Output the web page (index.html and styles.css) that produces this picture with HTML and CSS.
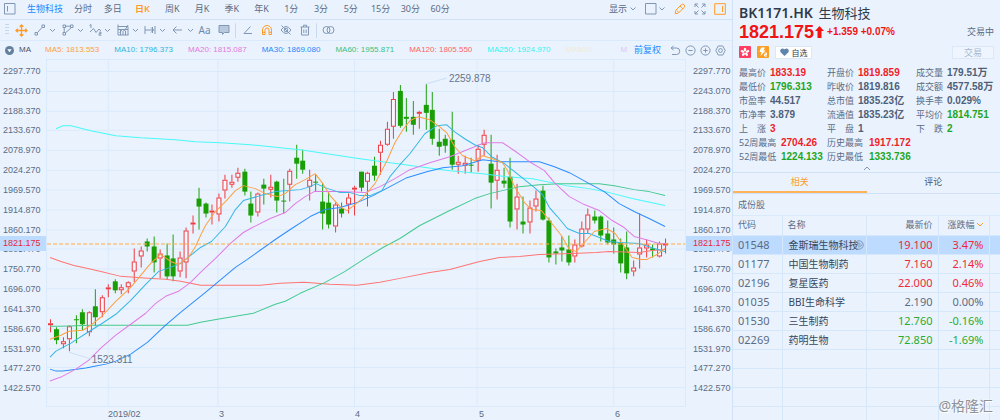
FILE: index.html
```html
<!DOCTYPE html>
<html lang="zh-CN">
<head>
<meta charset="utf-8">
<title>BK1171.HK 生物科技</title>
<link rel="stylesheet" href="styles.css">
</head>
<body>
<div class="app">
  <main class="main">
    <nav class="periods">
      <button class="icon-btn layout-btn" aria-label="布局"><svg class="ico" width="12" height="12" viewBox="0 0 12 12"><path d="M.5.5h10.500v10.500H.5zM3.500 3v5.500"/></svg></button>
      <a class="sector" href="#">生物科技</a>
      <div class="tabs">
        <button>分时</button><button>多日</button><button class="active">日K</button><button>周K</button><button>月K</button><button>季K</button><button>年K</button><button>1分</button><button>3分</button><button>5分</button><button>15分</button><button>30分</button><button>60分</button>
      </div>
      <div class="view">
        <button class="icon-btn">显示<svg class="ico" width="8" height="12" viewBox="0 0 8 12"><path d="M1.500 4.500l2.500 2.500 2.500-2.500"/></svg></button>
        <button class="icon-btn" aria-label="窗口布局"><svg class="ico" width="21" height="12" viewBox="0 0 21 12"><path d="M.5.5h10.500v10.500H.5zM14.500 4.500l2.500 2.500 2.500-2.500"/></svg></button>
        <button class="icon-btn hot" aria-label="画线"><svg class="ico" width="12" height="12" viewBox="0 0 12 12"><path d="M1.200 10.800l.6-3.600 5.600-5.600q1.400-1.100 2.600.1t.1 2.700l-5.600 5.600zM6 3l3 3M3 7.500l1.500 1.500"/></svg></button>
        <button class="icon-btn" aria-label="全屏"><svg class="ico" width="12" height="12" viewBox="0 0 12 12"><path d="M1 4V1h3M1 1l3.500 3.500M8 1h3v3M11 1L7.500 4.500M1 8v3h3M1 11l3.500-3.500M8 11h3V8M11 11L7.500 7.500"/></svg></button>
        <button class="icon-btn hot" aria-label="侧栏"><svg class="ico" width="12" height="12" viewBox="0 0 12 12"><path d="M.7.7h10.600v10.600H.7zM8.500 3v6"/></svg></button>
      </div>
    </nav>

    <div class="tools">
      <span class="grip"></span>
      <button class="icon-btn hot move" aria-label="移动"><svg class="ico" width="13" height="13" viewBox="0 0 13 13"><path stroke-width="1.300" d="M6.500 1v11M1 6.500h11M4.700 2.800l1.800-1.800 1.800 1.800M4.700 10.200l1.800 1.800 1.800-1.800M2.800 4.700L1 6.500l1.800 1.800M10.200 4.700L12 6.500l-1.800 1.800"/></svg></button>
      <div class="draw">
        <button class="icon-btn" aria-label="线段"><svg class="ico" width="22" height="12" viewBox="0 0 22 12"><path d="M1 8.500h2.500V11H1zM8 1h2.500v2.500H8zM3.500 8.500L8 3.500M16 5l2.500 2.500L21 5"/></svg></button>
        <button class="icon-btn" aria-label="形状"><svg class="ico" width="22" height="12" viewBox="0 0 22 12"><path d="M1 1h2.500v2.500H1zM8.500 1H11v2.500H8.500zM1 8.500h2.500V11H1zM3.500 2.200h5M2.200 3.500v5M3.500 8.800l6-5.300M16 5l2.500 2.500L21 5"/></svg></button>
        <button class="icon-btn" aria-label="波浪"><svg class="ico" width="22" height="12" viewBox="0 0 22 12"><path d="M.5 1.500L2 .5V4M1 8l3.500-3.500 2.500 4L10 5l2 2M10 8.200h2v1.500h-2v1.500h2.500M16 5l2.500 2.500L21 5"/></svg></button>
        <button class="icon-btn" aria-label="指标"><svg class="ico" width="22" height="12" viewBox="0 0 22 12"><path d="M1 .5V11h10.500M1 2.500h10V11M2.500 9l3-4 2 2 3.500-6M3.500 5v6M6 7v4M8.500 7v4M1 5.500h10M16 5l2.500 2.500L21 5"/></svg></button>
        <button class="icon-btn" aria-label="测量"><svg class="ico" width="22" height="12" viewBox="0 0 22 12"><path d="M1 2v8M11 2v8M1 6h9M7 3.500L9.500 6 7 8.500M8.500 3v6M16 5l2.500 2.500L21 5"/></svg></button>
        <button class="icon-btn" aria-label="箭头"><svg class="ico" width="22" height="12" viewBox="0 0 22 12"><path d="M1 6h9M4.500 2.500L1 6l3.500 3.500M16 5l2.500 2.500L21 5"/></svg></button>
      </div>
      <button class="icon-btn tool aa">Aa</button>
      <button class="icon-btn tool" aria-label="批注"><svg class="ico" width="12" height="12" viewBox="0 0 12 12"><path fill="#b9c9dd" d="M1 1.500h10v7H6.500L4.500 10.500v-2H1z"/></svg></button>
      <span class="sep"></span>
      <button class="icon-btn tool" aria-label="角度"><svg class="ico" width="12" height="12" viewBox="0 0 12 12"><path d="M8.500 2.500L2 9.500h8"/></svg></button>
      <button class="icon-btn hot tool" aria-label="磁铁"><svg class="ico" width="12" height="12" viewBox="0 0 12 12"><path d="M1.500 10.500V6a4.500 4.500 0 0 1 9 0v4.500H8V6a2 2 0 0 0-4 0v4.500zM1.500 8.300H4M8 8.300h2.500"/></svg></button>
      <button class="icon-btn tool" aria-label="隐藏"><svg class="ico" width="12" height="12" viewBox="0 0 12 12"><path d="M1 6q5-7 10 0-5 7-10 0zM1.500 1.500l9 9"/><circle cx="6" cy="6" r="1.800"/></svg></button>
      <button class="icon-btn tool" aria-label="删除"><svg class="ico" width="12" height="12" viewBox="0 0 12 12"><path d="M1.500 3h9M4.500 3V1.200h3V3M2.500 3v8h7V3M4.800 5.500v3.500M7.200 5.500v3.500"/></svg></button>
      <span class="sep"></span>
      <button class="icon-btn tool" aria-label="叠加"><svg class="ico" width="13" height="12" viewBox="0 0 13 12"><circle cx="4.500" cy="6" r="3.500"/><circle cx="8.500" cy="6" r="3.500"/></svg></button>
    </div>

    <div class="legend">
      <button class="icon-btn" aria-label="指标设置"><svg width="9" height="9" viewBox="0 0 9 9"><circle cx="4.500" cy="4.500" r="4.500" fill="#64809f"/><path fill="#fff" d="M2.300 3.200h4.400L4.500 6.300z"/></svg></button>
      <span class="ma-name">MA</span>
      <div class="mas">
        <span class="c5">MA5: 1813.553</span><span class="c10">MA10: 1796.373</span><span class="c20">MA20: 1815.087</span><span class="c30">MA30: 1869.080</span><span class="c60">MA60: 1955.871</span><span class="c120">MA120: 1805.550</span><span class="c250">MA250: 1924.970</span><span class="c500">MA500:</span><span class="c1000">M</span>
      </div>
      <a class="adjust" href="#">前复权</a>
      <div class="zooms">
        <button class="icon-btn" aria-label="撤销"><svg class="ico" width="11" height="11" viewBox="0 0 11 11"><path d="M3.500 1L1 3l2.500 2M1 3h5.500a3.200 3.200 0 0 1 0 6.500H2"/></svg></button>
        <button class="icon-btn" aria-label="缩小"><svg class="ico" width="11" height="11" viewBox="0 0 11 11"><circle cx="5.500" cy="5.500" r="4.600"/><path d="M3.300 5.500h4.400"/></svg></button>
        <button class="icon-btn" aria-label="放大"><svg class="ico" width="11" height="11" viewBox="0 0 11 11"><circle cx="5.500" cy="5.500" r="4.600"/><path d="M3.300 5.500h4.400M5.500 3.300v4.400"/></svg></button>
        <button class="icon-btn" aria-label="设置"><svg class="ico" width="11" height="11" viewBox="0 0 11 11"><path d="M3.200 1h4.600l2.400 4.500L7.800 10H3.200L.8 5.500z"/><circle cx="5.500" cy="5.500" r="1.900"/></svg></button>
      </div>
    </div>

    <div class="chart">
      <div class="axis left"><div class="ticks"></div><span class="now">1821.175</span></div>
      <div class="plot">
        <svg id="plot" viewBox="46 59 640 348" preserveAspectRatio="none" role="img" aria-label="日K线图"></svg>
        <span class="note high">2259.878</span>
        <span class="note low">1523.311</span>
      </div>
      <div class="axis right"><div class="ticks"></div><span class="now">1821.175</span></div>
      <div class="months"><span></span><span>2019/02</span><span>3</span><span>4</span><span>5</span><span>6</span></div>
    </div>
  </main>

  <aside class="side">
    <header class="quote">
      <h1>BK1171.HK <span>生物科技</span></h1>
      <div class="price">
        <strong>1821.175</strong><svg width="9" height="12" viewBox="0 0 9 12"><path fill="#f01414" d="M4.500 0L9 5H6.500v7h-4V5H0z"/></svg>
        <b>+1.359 +0.07%</b><span class="status">交易中</span>
      </div>
      <div class="badges">
        <svg width="12" height="12" viewBox="0 0 12 12"><rect width="12" height="12" rx="1" fill="#ff3f63"/><g fill="#fff"><ellipse cx="6" cy="3.600" rx="1.200" ry="1.900"/><ellipse cx="6" cy="3.600" rx="1.200" ry="1.900" transform="rotate(72 6 6.200)"/><ellipse cx="6" cy="3.600" rx="1.200" ry="1.900" transform="rotate(144 6 6.200)"/><ellipse cx="6" cy="3.600" rx="1.200" ry="1.900" transform="rotate(216 6 6.200)"/><ellipse cx="6" cy="3.600" rx="1.200" ry="1.900" transform="rotate(288 6 6.200)"/></g></svg>
        <svg width="12" height="12" viewBox="0 0 12 12"><rect width="12" height="12" rx="1" fill="#fa9f24"/><path fill="#fff" d="M4 1.500h4L6.500 4.500h2L3.500 10l1-4H2.500z"/><path fill="none" stroke="#fff" d="M7.500 7h2v1.500h-2V10H10"/></svg>
        <button class="fav"><svg width="9" height="8" viewBox="0 0 9 8"><path fill="#5f84ad" d="M4.500 8L.6 4.200C-.8 2 1.800-1.200 4.500 1.300 7.200-1.200 9.800 2 8.400 4.200z"/></svg>自选</button>
        <button class="trade" disabled>交易</button>
      </div>
    </header>
    <dl class="stats">
      <div><dt>最高价</dt><dd class="up">1833.19</dd></div><div><dt>开盘价</dt><dd class="up">1819.859</dd></div><div><dt>成交量</dt><dd>179.51万</dd></div>
      <div><dt>最低价</dt><dd class="down">1796.313</dd></div><div><dt>昨收价</dt><dd>1819.816</dd></div><div><dt>成交额</dt><dd>4577.58万</dd></div>
      <div><dt>市盈率</dt><dd>44.517</dd></div><div><dt>总市值</dt><dd>1835.23亿</dd></div><div><dt>换手率</dt><dd>0.029%</dd></div>
      <div><dt>市净率</dt><dd>3.879</dd></div><div><dt>流通值</dt><dd>1835.23亿</dd></div><div><dt>平均价</dt><dd class="down">1814.751</dd></div>
      <div><dt>上　涨</dt><dd class="up">3</dd></div><div><dt>平　盘</dt><dd>1</dd></div><div><dt>下　跌</dt><dd class="down">2</dd></div>
      <div class="wide"><dt>52周最高</dt><dd class="up">2704.26</dd></div><div class="wide span"><dt>历史最高</dt><dd class="up">1917.172</dd></div>
      <div class="wide"><dt>52周最低</dt><dd class="down">1224.133</dd></div><div class="wide span"><dt>历史最低</dt><dd class="down">1333.736</dd></div>
    </dl>
    <button class="icon-btn fold" aria-label="收起"><svg class="ico" width="8" height="5" viewBox="0 0 8 5"><path d="M1 4l3-3 3 3"/></svg></button>
    <div class="side-tabs"><button class="active">相关</button><button>评论</button></div>
    <h2>成份股</h2>
    <table class="stocks">
      <colgroup><col class="w-code"><col class="w-name"><col class="w-price"><col class="w-chg"><col></colgroup>
      <thead><tr><th>代码</th><th>名称</th><th class="n">最新价</th><th class="n">涨跌幅<svg class="ico hot" width="9" height="6" viewBox="0 0 9 6"><path d="M2 1l3 3 3-3"/></svg></th><th></th></tr></thead>
      <tbody>
        <tr class="sel up"><td>01548</td><td class="name">金斯瑞生物科技<svg class="ico tag" width="10" height="10" viewBox="0 0 10 10"><circle cx="5" cy="5" r="4.200"/><path d="M3 3.500q3-1.500 4 1T4 7M3.500 5H6"/></svg></td><td class="n">19.100</td><td class="n">3.47%</td><td></td></tr>
        <tr class="up"><td>01177</td><td class="name">中国生物制药</td><td class="n">7.160</td><td class="n">2.14%</td><td></td></tr>
        <tr class="up"><td>02196</td><td class="name">复星医药</td><td class="n">22.000</td><td class="n">0.46%</td><td></td></tr>
        <tr><td>01035</td><td class="name">BBI生命科学</td><td class="n">2.190</td><td class="n">0.00%</td><td></td></tr>
        <tr class="down"><td>01530</td><td class="name">三生制药</td><td class="n">12.760</td><td class="n">-0.16%</td><td></td></tr>
        <tr class="down"><td>02269</td><td class="name">药明生物</td><td class="n">72.850</td><td class="n">-1.69%</td><td></td></tr>
        <tr><td></td><td></td><td></td><td></td><td></td></tr>
        <tr><td></td><td></td><td></td><td></td><td></td></tr>
        <tr><td></td><td></td><td></td><td></td><td></td></tr>
        <tr><td></td><td></td><td></td><td></td><td></td></tr>
      </tbody>
    </table>
    <span class="watermark">@格隆汇</span>
  </aside>
</div>
<script src="chart.js"></script>
</body>
</html>
```
FILE: styles.css
```css
* { box-sizing: border-box; }
body {
  margin: 0;
  background: #eaf3fd;
  color: #5b6b85;
  font-family: "Noto Sans", "Noto Sans CJK SC", sans-serif;
  font-size: 9px;
  line-height: 12px;
}
button {
  padding: 0;
  border: 0;
  background: none;
  color: inherit;
  font: inherit;
}
a { text-decoration: none; }
.app {
  display: grid;
  grid-template-columns: minmax(0, 1fr) 268px;
  height: 100vh;
  overflow: hidden;
}
.ico {
  display: block;
  fill: none;
  stroke: #7f97b5;
}
.hot .ico, .ico.hot { stroke: #ff9c27; }
.icon-btn {
  display: flex;
  align-items: center;
  justify-content: center;
}

.main {
  display: flex;
  flex-direction: column;
  min-width: 0;
}
.periods {
  display: flex;
  align-items: center;
  height: 20px;
  padding: 0 6px 2px 4px;
  border-bottom: 1px solid #cfe2f7;
}
.layout-btn { margin-right: 11px; }
.sector, .adjust { color: #1e88ff; }
.sector { white-space: nowrap; }
.tabs {
  display: flex;
  flex: 0 1 387px;
  margin-left: 5px;
}
.tabs button { flex: 1; white-space: nowrap; }
.tabs .active { color: #ff9c27; font-weight: 600; }
.view {
  display: flex;
  align-items: center;
  gap: 8px;
  margin-left: auto;
}
.view .icon-btn { gap: 2px; }

.tools {
  display: flex;
  align-items: center;
  height: 21px;
  padding-left: 5px;
  border-bottom: 1px solid #d9eafc;
}
.grip {
  width: 4px;
  height: 12px;
  background: repeating-linear-gradient(#c6d8ec 0 1px, transparent 1px 3px);
}
.move { margin: 0 6px; }
.draw {
  display: flex;
  width: 165px;
}
.draw button { flex: 1; justify-content: flex-start; }
.tool { width: 19px; }
.aa { margin-left: -4px; color: #6f8aac; font-size: 10px; }
.sep {
  width: 1px;
  height: 15px;
  margin: 0 2px;
  background: #c9dbef;
}

.legend {
  display: flex;
  align-items: center;
  height: 18px;
  padding: 0 6px 0 5px;
  font-family: "Liberation Sans", "Noto Sans CJK SC", sans-serif;
  font-size: 8px;
  white-space: nowrap;
}
.ma-name { width: 26px; margin-left: 5px; color: #44536b; }
.mas {
  display: flex;
  flex: 1;
  gap: 15px;
  min-width: 0;
  overflow: hidden;
}
.c5 { color: #ff9f40; }
.c10 { color: #2db4dc; }
.c20 { color: #e579e0; }
.c30 { color: #1e88ff; }
.c60 { color: #34c283; }
.c120 { color: #ff6464; }
.c250 { color: #2ef4f4; }
.c500 { min-width: 40px; color: #f0ead6; }
.c1000 { color: #dcc8f5; }
.adjust { margin: 0 9px 0 1px; font-size: 9px; }
.zooms { display: flex; gap: 4px; }

.chart {
  display: grid;
  flex: 1;
  grid-template-columns: 46px minmax(0, 1fr) 46px;
  grid-template-rows: minmax(0, 1fr) 13px;
  min-height: 0;
  font-family: "Liberation Sans", sans-serif;
  font-size: 9px;
}
.axis { position: relative; }
.ticks {
  display: flex;
  flex-direction: column;
  height: 100%;
  padding: 2px 0 9px;
}
.ticks span {
  display: flex;
  flex: 1;
  align-items: center;
  min-height: 0;
}
.left .ticks span, .left .now { padding-left: 3px; }
.right .ticks span, .right .now { padding-left: 7px; }
.now {
  position: absolute;
  top: 51%;
  left: 0;
  width: 100%;
  height: 15px;
  background: #bddaff;
  color: #e8273c;
  line-height: 15px;
}
.plot {
  position: relative;
  border: solid #d9eafc;
  border-width: 0 1px 1px;
  min-height: 0;
}
.plot svg {
  display: block;
  width: 100%;
  height: 100%;
}
.plot svg * { vector-effect: non-scaling-stroke; }
.note {
  position: absolute;
  font-size: 10px;
  color: #66748c;
}
.high { top: 4%; left: 63%; }
.low { top: 85%; left: 7%; }
.months {
  display: grid;
  grid-column: 2;
  grid-template-columns: 62fr 111fr 136fr 124fr 136fr 71fr;
  line-height: 15px;
}

.side {
  position: relative;
  min-width: 0;
  border-left: 1px solid #cfe2f7;
  overflow: hidden;
}
.quote { padding: 4px 6px 0; }
h1 {
  margin: 0;
  color: #2f3a4c;
  font-size: 14px;
  font-weight: 600;
  line-height: 18px;
}
h1 span { margin-left: 2px; font-size: 13px; font-weight: 400; }
.price {
  display: flex;
  align-items: center;
  height: 20px;
  color: #f01414;
  font-family: "Liberation Sans", "Noto Sans CJK SC", sans-serif;
}
.price strong { font-size: 18px; }
.price svg { margin: 0 3px 0 1px; }
.price b { font-size: 10px; }
.status { margin-left: auto; color: #5b6b85; }
.badges {
  display: flex;
  align-items: center;
  gap: 6px;
  height: 20px;
}
.fav, .trade {
  display: flex;
  align-items: center;
  justify-content: center;
  height: 13px;
  border: 1px solid #dbe8f7;
  line-height: 11px;
}
.fav { gap: 3px; width: 37px; background: #fff; color: #2f3a4c; font-size: 8px; }
.trade { width: 42px; margin-left: auto; background: #eef5fe; color: #a7b9d0; }
.stats {
  display: grid;
  grid-template-columns: 88px 89px 1fr;
  margin: 4px 0 0;
  padding-left: 6px;
}
.stats div { display: flex; line-height: 14px; white-space: nowrap; }
.stats dt { width: 31px; }
.stats .wide dt { width: 42px; }
.stats .span { grid-column: span 2; }
.stats dd {
  margin: 0;
  color: #4e5f7a;
  font-family: "Liberation Sans", "Noto Sans CJK SC", sans-serif;
  font-size: 10px;
  font-weight: 700;
}
.stats .up { color: #f01e28; }
.stats .down { color: #1fa51f; }
.fold { width: 100%; height: 8px; }
.side-tabs {
  display: flex;
  border: solid #cfe2f7;
  border-width: 1px 0;
}
.side-tabs button { flex: 1; height: 20px; color: #44536b; border-bottom: 2px solid transparent; }
.side-tabs .active { border-bottom-color: #ffb257; color: #ff9c27; }
h2 {
  height: 22px;
  margin: 0;
  padding-left: 5px;
  border-bottom: 1px solid #d9eafc;
  font-size: 9px;
  font-weight: 400;
  line-height: 22px;
}
.stocks {
  width: 100%;
  border-collapse: collapse;
  table-layout: fixed;
  font-size: 11px;
}
.w-code { width: 49px; }
.w-name { width: 84px; }
.w-price { width: 72px; }
.w-chg { width: 51px; }
.stocks th, .stocks td {
  height: 19px;
  padding: 0 5px;
  border: 1px solid #d5e7fb;
  border-top: 0;
  text-align: left;
  white-space: nowrap;
}
.stocks th:first-child, .stocks td:first-child { border-left: 0; }
.stocks th:last-child, .stocks td:last-child { border-right: 0; }
.stocks th { font-size: 9px; font-weight: 400; }
.stocks .n { text-align: right; }
.stocks th .ico { display: inline-block; }
.stocks th.n:nth-child(4) { padding-left: 0; }
.stocks .name { position: relative; padding-left: 6px; color: #38465c; font-size: 10px; }
.stocks .tag { position: absolute; top: 4px; right: 2px; }
.stocks .up .n { color: #f0283a; }
.stocks .down .n { color: #2bab2b; }
.stocks .sel { background: #bddaff; }
.watermark {
  position: absolute;
  right: 7px;
  bottom: 5px;
  color: #8b929c;
  font-size: 14px;
  line-height: 18px;
  text-shadow: 0 0 2px #fff, 1px 1px 0 #fff;
}
```
FILE: chart.js
```js
// Candles: direction, then high, body top, body bottom and low in plot units.
const candles = `r 320 324 326 333|g 328 330 341 345|r 338 342 345 349|r 326 327 340 352|g 316 320 321 344|g 310 313 325 331|r 312 313 333 337|g 290 307 318 327|r 296 298 313 318|r 285 288 290 298|g 280 282 291 294|r 285 288 291 295|r 282 283 288 294|r 249 262 272 283|r 247 251 257 268|g 239 242 247 252|g 237 247 263 273|r 250 254 259 279|g 244 256 277 280|g 235 259 277 282|r 252 258 272 278|r 228 231 263 279|r 216 223 225 234|g 188 199 207 230|g 203 204 214 218|r 205 211 213 225|r 194 198 215 222|r 175 180 191 199|r 175 182 185 188|r 168 173 178 182|g 169 172 192 196|g 192 204 216 223|r 193 194 213 217|g 179 185 189 205|r 175 187 190 198|g 181 182 201 213|g 179 201 202 214|r 169 171 185 202|g 145 158 164 179|g 150 161 170 174|r 170 180 187 201|g 175 182 183 192|g 183 202 214 230|g 192 203 225 229|r 203 205 227 233|g 203 209 214 218|r 194 198 205 214|r 186 188 190 216|g 172 172 188 192|r 172 173 182 207|g 157 166 176 181|r 141 145 153 175|r 122 129 145 146|r 92 99 127 139|g 85 91 126 128|g 98 117 119 132|g 101 117 125 135|r 111 112 114 129|g 84 105 113 130|g 92 110 139 145|g 129 142 147 156|g 135 139 146 153|g 112 140 165 170|r 156 162 165 174|r 156 163 166 174|g 158 165 166 173|r 145 149 161 172|r 130 135 145 156|g 135 164 183 209|r 155 170 181 200|g 168 181 184 188|g 158 177 222 228|r 184 197 210 230|g 197 222 225 234|r 201 208 223 234|r 191 199 207 212|g 186 191 220 221|g 218 221 258 263|g 249 252 254 265|g 237 248 251 262|g 236 250 263 266|r 240 245 257 263|r 222 229 247 248|r 209 215 230 234|g 211 217 221 224|g 216 217 236 242|g 221 234 243 245|g 228 240 245 254|g 239 243 264 273|g 232 248 274 280|r 261 268 272 277|r 214 248 255 269|r 240 245 249 258|g 245 249 251 258|r 242 244 257 258|r 239 244 246 254`;

// Moving averages, each as a colour and its points.
const averages = [
  ['#48f8f8', '55,129 62,126 70,126 78,128 90,131 100,133 115,136 140,138 175,140 195,142 220,143 250,145 280,148 300,150 320,153 340,156 360,159 390,163 420,167 450,171 483,174 507,177 533,179 567,186 590,189 610,193 633,199 666,206'],
  ['#ff7474', '49,258 60,262 73,266 87,269 100,272 120,277 147,279 165,280 180,282 200,286 230,286 260,286 280,284 304,283 330,285 357,286 380,283 400,279 430,273 450,270 465,266 480,262 500,258 520,257 540,255 573,254 597,253 610,252 640,253 653,251 666,250'],
  ['#44c98f', '49,327 60,327 90,326 140,326 187,326 200,323 217,320 235,317 253,314 275,305 285,302 300,294 325,283 345,272 365,259 383,248 400,239 420,226 450,211 475,199 490,194 507,190 520,187 540,185 560,184 600,184 615,186 635,190 650,192 666,196'],
  ['#2b8cff', '49,370 55,372 62,372 70,371 85,369 95,367 105,365 115,362 130,355 147,343 165,326 180,313 205,293 235,268 247,260 275,240 290,230 310,217 325,210 340,208 357,203 373,196 390,187 407,178 427,172 443,168 463,166 473,163 483,160 500,162 540,162 555,167 570,173 590,184 605,192 620,204 635,212 650,219 666,227'],
  ['#e07be6', '49,382 60,378 75,370 88,361 100,349 115,336 130,325 145,314 155,304 165,297 178,292 190,283 200,273 215,259 230,244 243,233 252,228 270,219 285,213 295,204 305,197 314,192 340,192 365,193 380,187 395,179 410,170 430,163 450,157 470,149 485,143 503,143 515,151 530,162 545,171 555,183 570,197 585,205 600,211 613,221 625,228 635,237 650,241 660,244 666,244'],
  ['#35b6e4', '49,358 55,352 70,344 87,333 100,325 115,315 130,301 145,285 158,272 167,269 180,264 200,248 211,242 225,227 235,210 243,201 260,196 275,192 300,190 310,187 316,184 325,188 340,193 350,193 360,196 370,196 382,191 390,177 400,165 410,154 425,134 437,126 447,125 455,132 465,139 475,145 483,148 492,157 505,164 515,172 525,180 535,188 543,195 550,208 558,217 568,229 580,234 590,234 600,238 610,242 620,243 640,244 655,249 666,252'],
  ['#ff9f40', '49,340 60,336 68,332 82,331 90,326 100,318 115,302 130,288 140,276 150,264 160,255 170,262 178,265 188,258 195,247 200,236 205,226 214,213 225,202 235,191 243,186 255,189 265,194 277,197 285,194 295,185 305,180 315,174 322,183 330,196 340,207 347,211 355,205 362,199 375,184 387,161 395,143 403,130 410,121 418,117 430,120 440,127 447,133 455,147 463,156 475,161 483,156 493,159 503,163 508,171 515,187 525,203 532,210 542,211 550,221 562,236 570,250 577,252 585,243 595,232 607,229 616,234 625,247 633,258 642,260 648,260 658,255 666,249']
];

const out = [];
const line = (d, colour, extra = '') =>
  out.push(`<path d="${d}" fill="none" stroke="${colour}" ${extra}/>`);

for (let i = 0; i < 17; i++) line(`M46 ${Math.round(71 + i * 19.83) + 0.5}H686`, '#d9eafc');
for (const x of [107.5, 217.5, 354.5, 477.5, 614.5]) line(`M${x} 59V407`, '#d9eafc');
line('M46 59.5H686', '#d9eafc');

candles.split('|').forEach((row, i) => {
  const [dir, ...v] = row.split(' ');
  const [high, top, bottom, low] = v.map(Number);
  const x = Math.floor(49 + i * 6.5) + 0.5;
  if (dir === 'g') {
    line(`M${x} ${high}V${low}`, '#1fa010');
    out.push(`<rect x="${x - 2.5}" y="${top}" width="5" height="${bottom - top}" fill="#1a9e06"/>`);
  } else {
    line(`M${x} ${high}V${top}M${x} ${bottom}V${low}`, '#ee3a40');
    out.push(`<rect x="${x - 2}" y="${top + 0.5}" width="4" height="${Math.max(1, bottom - top - 1)}" fill="#f6f8fd" stroke="#ee3a40"/>`);
  }
});

for (const [colour, points] of averages)
  out.push(`<polyline points="${points}" fill="none" stroke="${colour}" stroke-linejoin="round"/>`);

line('M46 244.5H686', '#ffab45', 'stroke-dasharray="4 2"');
line('M426 84L447 78M68 353L91 360', '#cbdff5');
document.getElementById('plot').innerHTML = out.join('');

const labels = Array.from({ length: 17 }, (_, i) => `<span>${(2297.77 - i * 54.7).toFixed(3)}</span>`).join('');
document.querySelectorAll('.ticks').forEach(el => { el.innerHTML = labels; });
```
